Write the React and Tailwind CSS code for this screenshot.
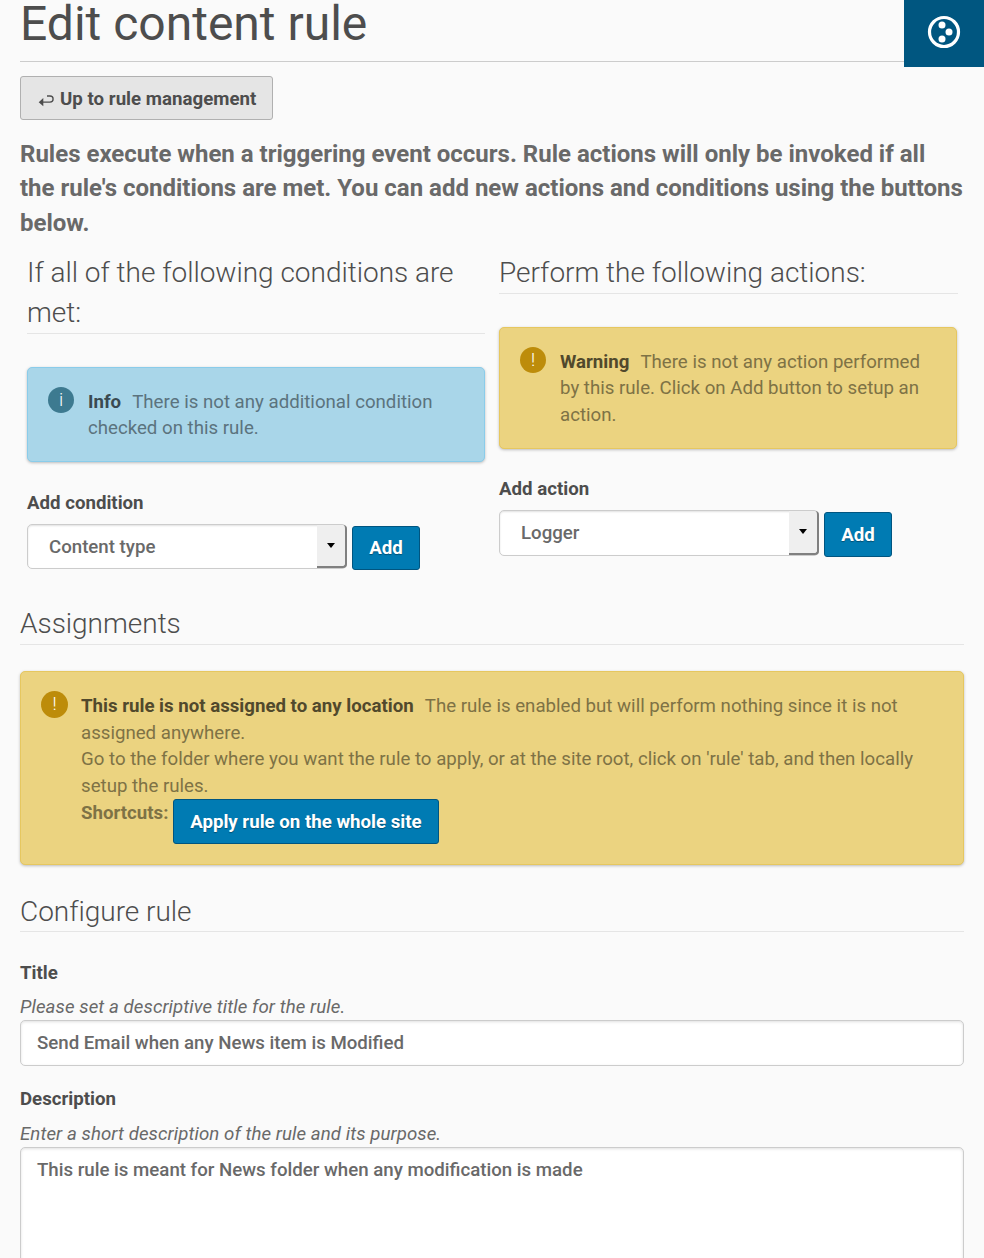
const BLUE_BTN =
  "flex shrink-0 items-center justify-center rounded-[3px] border border-[#005580] bg-[#007bb3] font-bold text-white [text-shadow:0_1px_1px_rgba(0,0,0,0.35)]";

function Heading({ children, className = "" }) {
  return (
    <h2 className={`border-b border-[#e5e5e5] text-[28px] font-light tracking-[-0.02px] text-[#4d4d4d] ${className}`}>
      {children}
    </h2>
  );
}

const TONES = {
  info: { box: "border-[#8accea] bg-[#a9d6e9]", dot: "bg-[#3d7a90]", text: "text-[#5b737e]", strong: "text-[#3a4a51]" },
  warning: { box: "border-[#e6c75f] bg-[#ebd380]", dot: "bg-[#bd8c0a]", text: "text-[#7e7245]", strong: "text-[#51492c]" },
};

function Alert({
  tone,
  mark,
  title,
  className,
  dotClass = "w-[26px] h-[26px] mr-[14px]",
  bodyClass = "mt-[21px] leading-[26.4px]",
  children,
}) {
  const t = TONES[tone];
  return (
    <div className={`flex rounded-[5px] border pl-5 shadow-[0_1px_3px_rgba(0,0,0,0.25)] ${t.box} ${className}`}>
      <span className={`mt-[19px] flex shrink-0 justify-center rounded-full text-[18.67px] leading-[26px] font-light text-white ${dotClass} ${t.dot}`}>
        {mark}
      </span>
      <div className={`min-w-0 flex-1 ${bodyClass} ${t.text}`}>
        <strong className={`mr-[6.8px] font-bold ${t.strong}`}>{title}</strong> {children}
      </div>
    </div>
  );
}

function Picker({ value, label, className, boxClass, buttonClass }) {
  return (
    <div className={className}>
      <div className="leading-[26px] font-bold text-[#4d4d4d]">{label}</div>
      <div className="mt-[8px] flex items-start">
        <div className={`flex w-[320px] justify-between rounded-[5px] border border-[#ccc] bg-white pl-[21px] shadow-[inset_0_1px_2px_rgba(0,0,0,0.12)] ${boxClass}`}>
          <span className="leading-[45px] font-medium text-[#696969]">{value}</span>
          <span className="-mr-px flex w-[30px] items-center justify-center self-stretch rounded-r-[4px] border-r-2 border-b-2 border-[#808080] bg-[#efefef]">
            <svg width="8" height="5" viewBox="0 0 8 5">
              <path d="M0 0h8L4 5z" fill="#000" />
            </svg>
          </span>
        </div>
        <button className={`${BLUE_BTN} ml-[5px] w-[68px] pt-px ${buttonClass}`}>Add</button>
      </div>
    </div>
  );
}

export default function App() {
  return (
    <div className="relative h-[1258px] w-[984px] overflow-hidden bg-[#fafafa] px-5 font-['Roboto',sans-serif] text-[18.67px] text-[#696969]">
      <div className="absolute top-0 right-0 flex h-[67px] w-20 items-center justify-center bg-[#005680]">
        <svg width="34" height="34" viewBox="0 0 34 34" className="-mt-[3px]">
          <circle cx="17" cy="17" r="14.5" fill="none" stroke="#fff" strokeWidth="3.2" />
          <circle cx="15" cy="10" r="3.5" fill="#fff" />
          <circle cx="22" cy="17" r="3.5" fill="#fff" />
          <circle cx="15" cy="24" r="3.5" fill="#fff" />
        </svg>
      </div>

      <h1 className="h-[62px] border-b border-[#ccc] text-[48px] leading-[48px] font-normal text-[#4d4d4d]">Edit content rule</h1>

      <button className="mt-[14px] flex h-[44px] w-[253px] items-center rounded-[3px] border border-[#b0b0b0] bg-[#e5e5e5] pt-[2px] pl-[17px] font-bold tracking-[0.02px] whitespace-nowrap text-[#4d4d4d]">
        <svg width="17" height="14" viewBox="0 0 17 14" className="mt-[3px] mr-[5px] shrink-0">
          <path d="M9 2h3a3.1 3.1 0 0 1 0 6.2H4" fill="none" stroke="#4d4d4d" strokeWidth="1.3" />
          <path d="M.7 8.2l4.6-4.1v8.2z" fill="#4d4d4d" />
        </svg>
        Up to rule management
      </button>

      <p className="mt-[17px] text-[24px] leading-[34.3px] font-bold">
        Rules execute when a triggering event occurs. Rule actions will only be invoked if all
        <br />
        the rule's conditions are met. You can add new actions and conditions using the buttons
        <br />
        below.
      </p>

      <div className="mt-[13px] flex h-[318px] gap-[14px] pl-[7px]">
        <section className="w-[458px]">
          <Heading className="leading-[40px]">
            If all of the following conditions are
            <br />
            met:
          </Heading>
          <Alert tone="info" mark="i" title="Info" className="mt-[33px] h-[95px]">
            There is not any additional condition
            <br />
            checked on this rule.
          </Alert>
          <Picker label="Add condition" value="Content type" className="mt-[28px]" boxClass="h-[45px]" buttonClass="mt-[2px] h-[44px]" />
        </section>
        <section className="w-[459px]">
          <Heading className="leading-[40px]">Perform the following actions:</Heading>
          <Alert tone="warning" mark="!" title="Warning" className="mt-[33px] mr-px h-[122px]">
            There is not any action performed
            <br />
            by this rule. Click on Add button to setup an
            <br />
            action.
          </Alert>
          <Picker label="Add action" value="Logger" className="mt-[27px]" boxClass="h-[46px]" buttonClass="mt-[2px] h-[45px]" />
        </section>
      </div>

      <Heading className="mt-[33px] leading-[40px]">Assignments</Heading>
      <Alert
        tone="warning"
        mark="!"
        title="This rule is not assigned to any location"
        className="mt-[26px] h-[194px]"
        dotClass="h-[27px] w-[27px] mr-[13px]"
        bodyClass="mt-[21px] leading-[26.67px]"
      >
        The rule is enabled but will perform nothing since it is not
        <br />
        assigned anywhere.
        <br />
        Go to the folder where you want the rule to apply, or at the site root, click on 'rule' tab, and then locally
        <br />
        setup the rules.
        <div className="flex items-start">
          <span className="font-bold">Shortcuts:</span>
          <button className={`${BLUE_BTN} -mt-px ml-[5px] h-[45px] w-[266px] pt-[2px] pr-px`}>Apply rule on the whole site</button>
        </div>
      </Alert>

      <Heading className="mt-[28px] h-[39px] leading-[38px]">Configure rule</Heading>
      <div className="mt-[28px] leading-[27px] font-bold text-[#4d4d4d]">Title</div>
      <div className="mt-[7px] h-[26px] leading-[27px] tracking-[0.07px] italic">Please set a descriptive title for the rule.</div>
      <div className="h-[46px] rounded-[5px] border border-[#ccc] bg-white px-4 leading-[45px] font-medium shadow-[inset_0_1px_3px_rgba(0,0,0,0.12)]">
        Send Email when any News item is Modified
      </div>
      <div className="mt-[20px] leading-[27px] font-bold text-[#4d4d4d]">Description</div>
      <div className="mt-[8px] h-[26px] leading-[27px] tracking-[0.07px] italic">Enter a short description of the rule and its purpose.</div>
      <div className="h-[130px] rounded-[5px] border border-[#ccc] bg-white px-4 leading-[45px] font-medium shadow-[inset_0_1px_3px_rgba(0,0,0,0.12)]">
        This rule is meant for News folder when any modification is made
      </div>
    </div>
  );
}
